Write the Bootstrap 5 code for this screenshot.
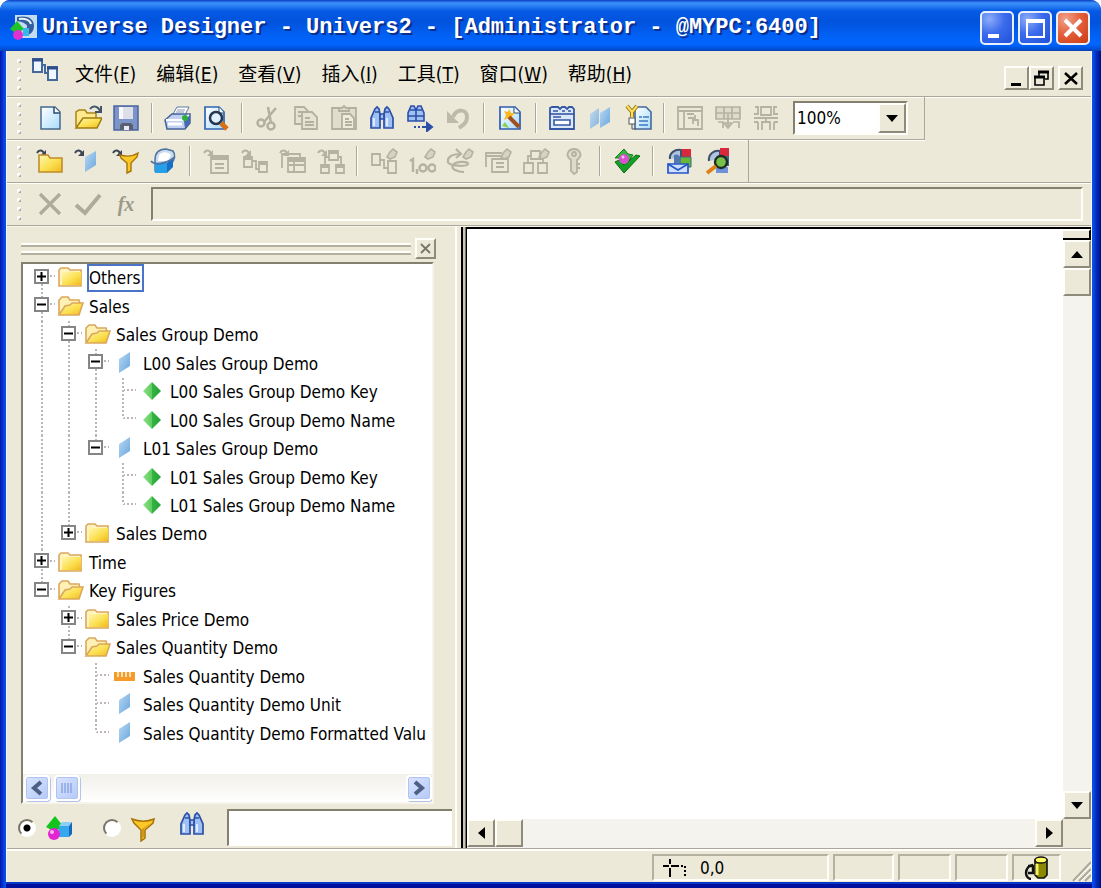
<!DOCTYPE html>
<html lang="zh-CN">
<head>
<meta charset="utf-8">
<meta name="viewport" content="width=device-width, initial-scale=1">
<title>Universe Designer</title>
<link href="https://cdn.jsdelivr.net/npm/bootstrap@5.3.0/dist/css/bootstrap.min.css" rel="stylesheet">
<style>
:root{--face:#ece9d8;--shade:#aca899;--dark:#83806f;--lite:#fffef8}
body{font-family:"DejaVu Sans Condensed","Noto Sans CJK SC",sans-serif;font-size:17px;line-height:24px;color:#000;background:#fff}
svg{display:block;flex:none}
.frame{min-height:100vh;border-radius:10px 10px 0 0;overflow:hidden;background:linear-gradient(to right,#0015b0,#0a4fe8 5px,#0a4fe8 calc(100% - 8px),#0030c8 calc(100% - 5px),#00107c);padding:0 9px 6px 6px}
.frame-body{background:var(--face);border-left:1px solid #f6f6f6;border-right:1px solid #f6f6f6;box-shadow:0 2px #0a36c8,0 6px #00109c}
.title-bar{height:51px;margin:0 -9px 0 -6px;padding:5px 11px 0 10px;background:linear-gradient(#0b3fc4,#3c92fb 3px,#2a80f4 6px,#0559e4 11px,#0153dd 22px,#0161f5 36px,#0266ff 44px,#0050d8 49px,#0a3fb0);}
.title-text{font:bold 22px/28px "Liberation Mono","DejaVu Sans Mono",monospace;color:#fff;text-shadow:2px 2px #0a2f8c}
.cap-btn{width:34px;height:34px;padding:0;border:2px solid #e8efff;border-radius:5px;background:radial-gradient(circle at 25% 20%,#8cacf8,#3c6cec 45%,#2050d8)}
.cap-close{background:radial-gradient(circle at 25% 20%,#f0a088,#e25c38 50%,#c83c14)}
.menu-bar{height:46px;border-bottom:1px solid var(--shade);box-shadow:0 1px var(--lite)}
.menu-list{gap:20px}
.menu-bar a{color:#000;text-decoration:none;font-size:19px;line-height:28px}
.grab{width:24px;flex:none;display:flex;justify-content:center}
.raised{background:var(--face);border:2px solid;border-color:#fffef8 #8e8b7c #8e8b7c #fffef8;padding:0;display:flex;align-items:center;justify-content:center;flex:none}
.mdi-btn{width:25px;height:24px}
.tools{height:43px;border-bottom:1px solid var(--shade);box-shadow:0 1px var(--lite)}
.tools-short{width:fit-content;border-right:1px solid var(--shade)}
.tools-part{border-right:1px solid var(--shade);padding-right:11px}
.tool{width:38px;height:38px;padding:0;border:0;background:none;display:flex;align-items:center;justify-content:center;flex:none}
.fx{font:italic bold 20px "Liberation Serif",serif;color:#9c998a}
.formula{margin:4px 8px 4px 6px}
.bar-gap{flex:none;width:14px;height:30px;background:linear-gradient(to right,var(--shade) 1px,var(--lite) 1px) 6px 0/2px 100% no-repeat}
.tools-wide .bar-gap{width:15px}
.zoom-box{width:115px;height:34px;border:2px solid;border-color:var(--dark) var(--lite) var(--lite) var(--dark);background:#fff;position:relative}
.zoom-box select{width:100%;height:100%;border:0;padding:0 0 0 2px;appearance:none;background:none;font-size:17px;outline:0;color:#000}
.zoom-box .raised{position:absolute;top:0;right:0;bottom:0;width:28px;pointer-events:none}
.sunken{border:2px solid;border-color:var(--dark) var(--lite) var(--lite) var(--dark);background:var(--face);border-radius:0}
.work{border-top:1px solid #f8f6ec}
.side-pane{width:448px;flex:none;padding-right:3px}
.pane-head{height:35px;padding:8px 0 0 14px}
.pane-line{height:4px;border-top:2px solid var(--lite);border-bottom:2px solid #b4b1a1}
.pane-close{width:21px;height:21px}
.tree-box{margin:0 18px 0 14px;border:2px solid;border-color:var(--dark) #f6f4ec #f6f4ec var(--dark);background:#fff;overflow:hidden}
.tree{list-style:none;margin:0;padding:0 0 26px 5px}
.tree li{flex:1 1 28px;display:flex;align-items:stretch;white-space:nowrap}
.g{width:27px;flex:none;display:flex;align-items:center;justify-content:center;
 --down:repeating-linear-gradient(#bdb6b2 0 2px,#fff 2px 4px);--over:repeating-linear-gradient(to right,#bdb6b2 0 2px,#fff 2px 4px)}
.g-v{background:var(--down) 13px 0/2px 100% no-repeat}
.g-t{background:var(--down) 13px 0/2px 100% no-repeat,var(--over) 14px 11px/13px 2px no-repeat}
.g-l{background:var(--down) 13px 0/2px 12px no-repeat,var(--over) 14px 11px/13px 2px no-repeat}
.g-f{background:var(--down) 13px 12px/2px 100% no-repeat,var(--over) 14px 11px/13px 2px no-repeat}
.knob{width:15px;height:15px;margin-bottom:4px;padding:0;border:2px solid #858585;background:#fff;display:flex;align-items:center;justify-content:center}
.pic{width:31px;flex:none;display:flex;align-items:center;justify-content:center;padding-bottom:2px}
.leaf-text{align-self:center;padding:0 2px 0 3px;line-height:28px}
.leaf-on{margin-left:1px;padding-left:0;line-height:24px;border:2px solid #4a74c8}
.xp-scroll{height:28px;background:linear-gradient(#f1f0ea,#fff);padding:1px 0 0 1px}
.xp-btn{width:26px;height:26px;padding:0;border:2px solid #fff;border-radius:4px;background:linear-gradient(135deg,#dbe5ff,#b4c8f8);box-shadow:inset 0 0 0 1px #b0c4f4,1px 1px #b4c4e8;display:flex;align-items:center;justify-content:center}
.find-row{height:44px;padding:3px 0 0 11px}
.find-row input[type=radio]{appearance:none;width:18px;height:18px;margin:0;border-radius:50%;border:2px solid;border-color:#77756a #fff #fff #77756a;background:#fff}
.find-row input[type=radio]:checked{background:radial-gradient(circle,#000 3px,#fff 4px)}
.find-row input[type=text]{width:225px;height:37px;background:#fff;border-right-width:0;border-bottom-width:1px;outline:0}
.divider{width:12px;flex:none;background:linear-gradient(to right,var(--lite) 0 2px,var(--face) 2px 6px,#000 6px 8px,#c9c6b8 8px 10px,#77756a 10px 11px,#000 11px)}
.canvas-col{min-width:0;border-top:2px solid #000}
.track{background:#f4f3ee}
.v-track{width:28px;flex:none}
.h-track{height:29px}
.arrow-key{width:28px;height:28px}
.split-bit{height:11px;border:2px solid #000;border-left:0;border-top-color:#fffef8;background:var(--face)}
.status{height:34px;border-top:1px solid var(--shade);box-shadow:inset 0 2px var(--lite);padding:5px 0 0}
.cell{border:2px solid;border-color:#b4b1a1 var(--lite) var(--lite) #b4b1a1;height:27px;flex:none;width:53px}
.cell-pos{width:177px}
.cell-wide{width:61px}
.cell-db{width:49px}
</style>
</head>
<body>
<svg width="0" height="0" class="position-absolute" aria-hidden="true">
<defs>
<linearGradient id="gy" x1="0" y1="0" x2="1" y2="1"><stop offset="0" stop-color="#fff6b0"/><stop offset=".55" stop-color="#fbe050"/><stop offset="1" stop-color="#f0b820"/></linearGradient>
<linearGradient id="gb" x1="0" y1="0" x2="1" y2="1"><stop offset="0" stop-color="#b8d8f4"/><stop offset="1" stop-color="#6aa6dc"/></linearGradient>
<linearGradient id="gp" x1="0" y1="0" x2="1" y2="1"><stop offset="0" stop-color="#fff"/><stop offset="1" stop-color="#a8dcfc"/></linearGradient>
<linearGradient id="gg" x1="0" y1="0" x2="1" y2="0"><stop offset="0" stop-color="#8ee08a"/><stop offset=".5" stop-color="#5ccc5c"/><stop offset=".5" stop-color="#36b444"/><stop offset="1" stop-color="#24a038"/></linearGradient>
<symbol id="grip" viewBox="0 0 6 34"><g fill="#fff"><rect x="1" y="2" width="4" height="4" rx="1"/><rect x="1" y="11" width="4" height="4" rx="1"/><rect x="1" y="20" width="4" height="4" rx="1"/><rect x="1" y="29" width="4" height="4" rx="1"/></g><g fill="#aeab9c"><path d="M5 3v3H2zM5 12v3H2zM5 21v3H2zM5 30v3H2z"/></g></symbol>
<symbol id="app" viewBox="0 0 28 28"><rect x="5" y="1" width="22" height="23" fill="#c4dcf0"/><path d="M7 3c10-2 17 1 17 9 0 6-4 9-8 9l-1-6c4-2 3-6-8-8z" fill="#345f9c"/><path d="M9 5c6-1 11 1 12 5" stroke="#e8f4ff" stroke-width="2" fill="none"/><path d="M0 15L7 7l7 8-7 5z" fill="#20c428"/><circle cx="8" cy="21" r="5" fill="#e030d0"/><rect x="13" y="14" width="6" height="8" fill="#38b8e8"/></symbol>
<symbol id="doclink" viewBox="0 0 28 26"><g fill="#eef6ff" stroke="#44689c" stroke-width="2"><rect x="2" y="2" width="9" height="13"/><rect x="17" y="10" width="9" height="13"/></g><path d="M1 3h11M16 11h11" stroke="#2e4f8c" stroke-width="3"/><path d="M11 8h3v8h3" stroke="#44689c" stroke-width="2" fill="none"/></symbol>
<symbol id="new" viewBox="0 0 26 26"><path d="M4 2h14l5 5v17H4z" fill="url(#gp)" stroke="#44688c" stroke-width="1.5"/><path d="M17 2v6h6" fill="#fff" stroke="#2c4a70" stroke-width="1.5"/></symbol>
<symbol id="open" viewBox="0 0 28 26"><path d="M2 22V7l3-2h6l2 3h9v5" fill="#ffe98c" stroke="#a88418" stroke-width="1.5"/><path d="M2 23l7-10h19l-5 10z" fill="url(#gy)" stroke="#a07c10" stroke-width="1.5"/><path d="M16 4c3-4 8-3 10 2M27 1v6h-6" fill="none" stroke="#44546c" stroke-width="2"/></symbol>
<symbol id="save" viewBox="0 0 26 26"><rect x="1" y="1" width="24" height="24" fill="#7c94c8" stroke="#4c64a0" stroke-width="1.5"/><rect x="6" y="2" width="14" height="12" fill="#dcdfe8"/><rect x="6" y="2" width="4" height="12" fill="#f8f8fc"/><path d="M7 25v-5l2-2h9l2 2v5z" fill="#5a6070"/><rect x="11" y="21" width="5" height="4" fill="#e8ecf4"/></symbol>
<symbol id="print" viewBox="0 0 28 26"><path d="M9 9l4-7h12l-4 8z" fill="#fff" stroke="#6078a8"/><path d="M13 5h8M12 7h8" stroke="#8894b0"/><path d="M1 15l7-6h18v9l-5 6H3z" fill="#c0d0f0" stroke="#46629c" stroke-width="1.5"/><path d="M2 15h17l6-5" stroke="#fff" fill="none" stroke-width="2"/><path d="M20 16l6-6v8l-5 6z" fill="#4868b0"/><path d="M4 19h14" stroke="#fff" stroke-width="3"/><circle cx="21" cy="13" r="3" fill="#2cb03c"/></symbol>
<symbol id="preview" viewBox="0 0 26 26"><path d="M2 2h14l5 5v17H2z" fill="url(#gp)" stroke="#2f64b4" stroke-width="1.7"/><path d="M16 2v6h5" fill="#fff" stroke="#2c4a70"/><circle cx="13" cy="13" r="6" fill="#e0f2ff" stroke="#26374e" stroke-width="2.5"/><path d="M18 18l6 6" stroke="#d87018" stroke-width="5"/></symbol>
<symbol id="cut" viewBox="0 0 26 26"><g fill="none" stroke="#b3b0a1" stroke-width="2.5"><path d="M21 3L9 17M13 2l3 16"/><circle cx="6" cy="18" r="3.5"/><circle cx="16" cy="21" r="3.5"/></g></symbol>
<symbol id="copy" viewBox="0 0 26 26"><g fill="#e6e3d3" stroke="#b3b0a1" stroke-width="1.8"><path d="M2 2h9l4 4v13H2z"/><path d="M9 7h10l5 5v12H9z"/><path d="M5 7h4M5 11h4M12 13h5M12 17h9M12 20h9"/></g></symbol>
<symbol id="paste" viewBox="0 0 26 26"><g fill="#e0ddcd" stroke="#b3b0a1" stroke-width="1.8"><path d="M1 3h24v21H1z"/><path d="M8 6V3h3l2-2 2 2h3v3z"/><path d="M11 9h8l4 4v11H11z" fill="#efecdd"/><path d="M14 14h4M14 17h7M14 20h7"/></g></symbol>
<symbol id="find" viewBox="0 0 26 26"><g fill="#9fc0f2" stroke="#2c4fa8" stroke-width="1.7"><path d="M6 4l2-2 2 2 1 5v14H2V13z"/><path d="M20 4l-2-2-2 2-1 5v14h9V13z"/><path d="M11 9h4v5h-4z"/><path d="M6 7h4M16 7h4"/></g><path d="M5 13v8M18 13v8" stroke="#dcebff" stroke-width="2"/></symbol>
<symbol id="findnext" viewBox="0 0 28 28"><g fill="#9fc0f2" stroke="#2c4fa8" stroke-width="1.6"><path d="M5 2h3l2 4v11H2V9zM15 2h-3l-2 4v11h8V9z"/><path d="M4 6h12M2 12h16"/></g><path d="M8 23h2m2 0h2m2 0h9M21 19l5 4-5 4z" stroke="#2c4fa8" stroke-width="2" fill="#2c4fa8"/></symbol>
<symbol id="undo" viewBox="0 0 26 26"><path d="M8 12C12 3 22 4 22 12c0 6-4 8-8 11" fill="none" stroke="#bdbaac" stroke-width="4"/><path d="M2 6v12h12z" fill="#bdbaac"/></symbol>
<symbol id="wizard" viewBox="0 0 26 26"><path d="M3 2h15l5 5v17H3z" fill="url(#gp)" stroke="#2f5cb0" stroke-width="1.7"/><path d="M17 2v6h6" fill="#fff" stroke="#2c4a70"/><path d="M12 4l2 4 4 0-3 3 1 5-5-3-4 2 2-5-2-4 4 1z" fill="#fbb820"/><path d="M12 12l10 10" stroke="#a05020" stroke-width="4"/><path d="M5 21l3-4 4 6" fill="#8ccc50"/></symbol>
<symbol id="form" viewBox="0 0 26 26"><path d="M1 3l2-1h6l2 2 2-2h3l2 2 2-2h3l2 2v20H1z" fill="#dce8fa" stroke="#3458a4" stroke-width="1.8"/><path d="M1 9h24" stroke="#3458a4" stroke-width="1.6"/><path d="M4 12h8M4 6h5M13 6h3M19 6h3" stroke="#3458a4" stroke-width="1.6"/><path d="M5 15h16v5H5z" fill="#fff" stroke="#3458a4" stroke-width="1.6"/></symbol>
<symbol id="twin" viewBox="0 0 26 26"><path d="M3 9l9-6v15l-9 6z" fill="url(#gb)" opacity=".8"/><path d="M13 8l10-6v15l-10 6z" fill="url(#gb)"/></symbol>
<symbol id="cond" viewBox="0 0 28 28"><path d="M11 3h11l5 5v17H11z" fill="url(#gp)" stroke="#44689c" stroke-width="1.6"/><path d="M15 13h3M19 13h6M15 17h9M15 21h9" stroke="#3f78c0" stroke-width="1.6"/><path d="M3 2l5 6 5-6M8 8v5" stroke="#9a7a10" stroke-width="4" fill="none"/><path d="M3 2l5 6 5-6M8 8v5" stroke="#ffe060" stroke-width="2" fill="none"/><rect x="5" y="14" width="6" height="6" fill="#fff" stroke="#555"/><path d="M8 20v5h4" stroke="#555" fill="none"/></symbol>
<symbol id="gridlist" viewBox="0 0 26 26"><g fill="none" stroke="#b5b2a3" stroke-width="1.8"><path d="M1 2h24v22H1zM1 6h24M7 6v18M10 9h7M11 13h5v6M16 15h5v6M18 10v5"/></g></symbol>
<symbol id="gridmove" viewBox="0 0 26 26"><g fill="#dedbcb" stroke="#b5b2a3" stroke-width="1.7"><path d="M1 2h24v12H1zM1 8h24M9 2v12M17 2v12"/><path d="M13 9v14M9 18h8l-4 5z"/><path d="M3 17h5v6M18 17h6v6" fill="none"/></g></symbol>
<symbol id="fit" viewBox="0 0 26 26"><g fill="none" stroke="#b5b2a3" stroke-width="1.8"><path d="M8 2h10v8H8zM2 2h3v7H1M24 2h-3v7h4M1 13h24M5 17v8M1 17h4M21 17v8M21 17h4M9 25v-8h8v8M13 13v4"/></g></symbol>
<symbol id="mini" viewBox="0 0 28 28"><path d="M1 6c2-4 6-3 7 1" fill="none" stroke="currentColor" stroke-width="2"/><path d="M10 3v6H4z" fill="currentColor"/></symbol>
<symbol id="nclass" viewBox="0 0 28 28"><g color="#3c4654"><use href="#mini" width="28" height="28"/></g><path d="M3 25V8h9l2 3h12v14z" fill="url(#gy)" stroke="#c08c2c" stroke-width="1.6"/></symbol>
<symbol id="ndim" viewBox="0 0 28 28"><g color="#3c4654"><use href="#mini" width="28" height="28"/></g><path d="M11 10l11-6v14l-11 7z" fill="url(#gb)"/></symbol>
<symbol id="funnel" viewBox="0 0 28 28"><path d="M3 5c8 3 15 3 22 0l-1 4-8 7v8l-4 3V16L5 9z" fill="#fbc828" stroke="#a87408" stroke-width="1.5"/><path d="M13 15v9l2-1V15l7-6" fill="#b87810" opacity=".6"/></symbol>
<symbol id="nfun" viewBox="0 0 28 28"><g color="#3c4654"><use href="#mini" width="28" height="28"/></g><path d="M8 8c7 2 12 2 18-2l-1 4-6 6v8l-4 2V16l-6-5z" fill="#fbc828" stroke="#a87408" stroke-width="1.4"/></symbol>
<symbol id="cube" viewBox="0 0 28 28"><path d="M5 13c0-8 5-11 11-11l7 2c3 4 1 9-1 12l-5 8H5z" fill="#c8dcf0" stroke="#5074a0" stroke-width="1.5"/><path d="M9 8c4-4 9-3 12 0l-3 6H8z" fill="#fff"/><path d="M5 16h12v10H5z" fill="#28a0e8"/><path d="M17 16l6-5v9l-6 6z" fill="#1870c4"/><path d="M1 14c3 4 14 4 24-4" stroke="#4c74a8" stroke-width="2" fill="none"/></symbol>
<symbol id="t1" viewBox="0 0 28 28"><g color="#b5b2a3"><use href="#mini" width="28" height="28"/><g fill="none" stroke="currentColor" stroke-width="1.8"><path d="M8 9h17v17H8zM12 17h9M12 21h9"/><path d="M8 11h17" stroke-width="4"/></g></g></symbol>
<symbol id="t2" viewBox="0 0 28 28"><g color="#b5b2a3"><use href="#mini" width="28" height="28"/><g fill="none" stroke="currentColor" stroke-width="1.8"><path d="M3 10h8v10H3zM18 15h8v10h-8zM11 14h4v8h3M3 12h8M18 17h8"/></g></g></symbol>
<symbol id="t3" viewBox="0 0 28 28"><g color="#b5b2a3"><use href="#mini" width="28" height="28"/><g fill="none" stroke="currentColor" stroke-width="1.8"><path d="M3 21V7h18v3M9 11h17v14H9zM9 18h17M15 15v10"/><path d="M9 13h17" stroke-width="4"/></g></g></symbol>
<symbol id="t4" viewBox="0 0 28 28"><g color="#b5b2a3"><use href="#mini" width="28" height="28"/><g fill="none" stroke="currentColor" stroke-width="1.8"><path d="M12 4h9v9h-9zM4 18h8v8H4zM19 18h8v8h-8zM12 10H8v8M21 10h3v8M12 6h9M4 20h8M19 20h8"/></g></g></symbol>
<symbol id="spark" viewBox="0 0 28 28"><path d="M20 5l3-3 4 3-2 5-5 2-3-2z" fill="#d6d3c3" stroke="#b5b2a3" stroke-width="1.6"/></symbol>
<symbol id="s1" viewBox="0 0 28 28"><use href="#spark" width="28" height="28"/><g fill="none" stroke="#b5b2a3" stroke-width="1.8"><path d="M2 7h8v11H2zM18 14h8v12h-8zM10 13h4v8h4"/></g></symbol>
<symbol id="s2" viewBox="0 0 28 28"><use href="#spark" width="28" height="28"/><g fill="none" stroke="#b5b2a3" stroke-width="2.4"><path d="M2 14l3-2v13M9 22v5"/><circle cx="15" cy="21" r="3.5"/><circle cx="24" cy="21" r="3.5"/></g></symbol>
<symbol id="s3" viewBox="0 0 28 28"><use href="#spark" width="28" height="28"/><g fill="none" stroke="#b5b2a3" stroke-width="2.2"><path d="M14 7C5 7 1 11 2 15s19 5 20 2-12-3-15 1 5 7 11 7M10 2l5 5-5 4"/></g></symbol>
<symbol id="s4" viewBox="0 0 28 28"><use href="#spark" width="28" height="28"/><g fill="none" stroke="#b5b2a3" stroke-width="1.8"><path d="M2 20V6h16M2 9h15M8 12h16v13H8zM12 16h8M12 20h8"/></g></symbol>
<symbol id="s5" viewBox="0 0 28 28"><use href="#spark" width="28" height="28"/><g fill="none" stroke="#b5b2a3" stroke-width="1.8"><path d="M9 4h9v8H9zM2 16h9v10H2zM16 16h9v10h-9zM9 9H6v7M18 12h3v4"/></g></symbol>
<symbol id="pkey" viewBox="0 0 28 28"><g fill="#dedbcb" stroke="#b5b2a3" stroke-width="1.8"><path d="M11 13C4 8 9 2 14 2s10 6 3 11v12l-3 2-3-3z"/><circle cx="14" cy="7" r="2"/><path d="M17 17h3M17 21h3"/></g></symbol>
<symbol id="check" viewBox="0 0 28 28"><path d="M2 11l9-9 4 5 5 1-5 7-6-4z" fill="#30b838" stroke="#147a1c"/><path d="M2 15l9 11L27 9l-4-1-12 10-5-5z" fill="#14a024" stroke="#086c14"/><circle cx="11" cy="12" r="5" fill="#d850d0"/><circle cx="10" cy="10" r="1.5" fill="#fbc4f4"/></symbol>
<symbol id="mail" viewBox="0 0 28 28"><path d="M4 12c-1-6 5-10 11-9v8" fill="#b0c4dc" stroke="#40506c" stroke-width="2"/><path d="M16 2h9v8h-9z" fill="#d8283c"/><path d="M14 10h11v10H14z" fill="#68b838" stroke="#386888"/><path d="M8 8c5-2 8 2 6 8l-6 1z" fill="#5478b0"/><path d="M2 17h20v9H2z" fill="#cfe0ff" stroke="#2454c8" stroke-width="1.7"/><path d="M2 17l10 6 10-6" fill="none" stroke="#2454c8" stroke-width="1.7"/></symbol>
<symbol id="lens" viewBox="0 0 28 28"><path d="M5 14c-1-7 5-11 11-10v8" fill="#b0c4dc" stroke="#40506c" stroke-width="2"/><path d="M16 1h9v8h-9z" fill="#d8283c"/><path d="M12 20h12v6H12z" fill="#7090d8"/><path d="M19 9h6v10h-6z" fill="#386888"/><circle cx="17" cy="15" r="6" fill="#78c048" stroke="#1c2c24" stroke-width="2.4"/><path d="M12 19l-9 7" stroke="#e08018" stroke-width="4"/></symbol>
<symbol id="cross" viewBox="0 0 26 26"><path d="M3 3l20 20M23 3L3 23" stroke="#aeab9b" stroke-width="3.2"/></symbol>
<symbol id="tick" viewBox="0 0 28 26"><path d="M2 14l9 8L26 4" fill="none" stroke="#aeab9b" stroke-width="4"/></symbol>
<symbol id="fold" viewBox="0 0 28 24"><path d="M2 21V5l2-2h7l2 2h11v16z" fill="#fff3c0" stroke="#dba75c" stroke-width="1.6"/><path d="M5 7h19v13H5z" fill="url(#gy)"/></symbol>
<symbol id="ofold" viewBox="0 0 28 24"><path d="M2 20V6l3-3h6l2 3h9l1 4" fill="#fff0b4" stroke="#dba75c" stroke-width="1.6"/><path d="M2 21l6-9 5-1 2-2h11l-4 12z" fill="url(#gy)" stroke="#dba75c" stroke-width="1.6"/></symbol>
<symbol id="dim" viewBox="0 0 26 24"><path d="M7 8l11-7v14L7 22z" fill="url(#gb)"/></symbol>
<symbol id="dia" viewBox="0 0 26 24"><path d="M13 3l9 9-9 9-9-9z" fill="url(#gg)"/></symbol>
<symbol id="rule" viewBox="0 0 26 24"><rect x="2" y="8" width="21" height="9" fill="#f79a2c"/><path d="M6 8v5M10 8v5M14 8v5M18 8v5" stroke="#fff0d0" stroke-width="1.6"/></symbol>
<symbol id="shapes" viewBox="0 0 30 28"><path d="M2 13L11 2l8 10-8 6z" fill="#12c41c"/><path d="M15 12l3-4h10l-3 4z" fill="#8cd0f8"/><path d="M15 12h10v11H15z" fill="#38a8ec"/><path d="M25 12l3-4v12l-3 3z" fill="#1468c0"/><circle cx="10" cy="20" r="6" fill="#e224d4"/><circle cx="8" cy="18" r="2" fill="#fbb4f4"/></symbol>
<symbol id="db" viewBox="0 0 26 24"><path d="M9 9c-4 0-7 4-7 8s3 6 5 6M4 10h5v7H4" fill="none" stroke="#111" stroke-width="2.4"/><path d="M11 4h12v15l-3 3h-6l-3-3z" fill="#8c8800" stroke="#111" stroke-width="1.6"/><path d="M13 8v11" stroke="#f4f060" stroke-width="3"/><ellipse cx="17" cy="4" rx="6" ry="3" fill="#fffc60" stroke="#111" stroke-width="1.4"/></symbol>
<symbol id="plus" viewBox="0 0 9 9"><path d="M0 4.500h9M4.500 0v9" stroke="#000" stroke-width="2"/></symbol>
<symbol id="minus" viewBox="0 0 9 9"><path d="M0 4.500h9" stroke="#000" stroke-width="2"/></symbol>
</defs></svg>

<div class="frame d-flex flex-column">
 <header class="title-bar d-flex align-items-center">
  <svg width="28" height="28"><use href="#app"/></svg>
  <h1 class="title-text mb-0 ms-1 flex-grow-1 text-nowrap">Universe Designer - Univers2 - [Administrator - @MYPC:6400]</h1>
  <div class="d-flex gap-1">
   <button type="button" class="cap-btn" aria-label="Minimize"><svg width="30" height="30"><path d="M6 21h11v4H6z" fill="#fff"/></svg></button>
   <button type="button" class="cap-btn" aria-label="Maximize"><svg width="30" height="30"><path d="M7 7h17v17H7z" fill="none" stroke="#fff" stroke-width="2"/><path d="M6 8h19" stroke="#fff" stroke-width="4"/></svg></button>
   <button type="button" class="cap-btn cap-close" aria-label="Close"><svg width="30" height="30"><path d="M7 7l16 16M23 7L7 23" stroke="#fff" stroke-width="4"/></svg></button>
  </div>
 </header>

 <div class="frame-body flex-grow-1 d-flex flex-column">
  <nav class="menu-bar d-flex align-items-center">
   <span class="grab"><svg width="6" height="34"><use href="#grip"/></svg></span>
   <svg width="28" height="26" class="mb-2"><use href="#doclink"/></svg>
   <div class="menu-list d-flex flex-grow-1 ms-3 text-nowrap">
    <a href="#">文件(<u>F</u>)</a><a href="#">编辑(<u>E</u>)</a><a href="#">查看(<u>V</u>)</a><a href="#">插入(<u>I</u>)</a><a href="#">工具(<u>T</u>)</a><a href="#">窗口(<u>W</u>)</a><a href="#">帮助(<u>H</u>)</a>
   </div>
   <div class="d-flex me-2 mt-2">
    <button type="button" class="raised mdi-btn" aria-label="Minimize document"><svg width="20" height="20"><path d="M4 15h10v3H4z"/></svg></button>
    <button type="button" class="raised mdi-btn" aria-label="Restore document"><svg width="20" height="20"><g fill="none" stroke="#000" stroke-width="1.600"><path d="M7 8V4h9v7h-3M3 9h9v8H3z"/><path d="M6 4h11M2 9h11" stroke-width="3"/></g></svg></button>
    <button type="button" class="raised mdi-btn ms-1" aria-label="Close document"><svg width="20" height="20"><path d="M4 5l12 11M16 5L4 16" stroke="#000" stroke-width="2.500"/></svg></button>
   </div>
  </nav>

  <div class="tools tools-short d-flex align-items-center pe-3" role="toolbar" aria-label="Standard">
   <span class="grab"><svg width="6" height="34"><use href="#grip"/></svg></span>
   <button type="button" class="tool" aria-label="New"><svg width="26" height="26"><use href="#new"/></svg></button>
   <button type="button" class="tool" aria-label="Open"><svg width="28" height="26"><use href="#open"/></svg></button>
   <button type="button" class="tool" aria-label="Save"><svg width="26" height="26"><use href="#save"/></svg></button>
   <span class="bar-gap"></span>
   <button type="button" class="tool" aria-label="Print"><svg width="28" height="26"><use href="#print"/></svg></button>
   <button type="button" class="tool" aria-label="Print preview"><svg width="26" height="26"><use href="#preview"/></svg></button>
   <span class="bar-gap"></span>
   <button type="button" class="tool" aria-label="Cut"><svg width="26" height="26"><use href="#cut"/></svg></button>
   <button type="button" class="tool" aria-label="Copy"><svg width="26" height="26"><use href="#copy"/></svg></button>
   <button type="button" class="tool" aria-label="Paste"><svg width="26" height="26"><use href="#paste"/></svg></button>
   <button type="button" class="tool" aria-label="Find"><svg width="26" height="26"><use href="#find"/></svg></button>
   <button type="button" class="tool" aria-label="Find next"><svg width="28" height="28"><use href="#findnext"/></svg></button>
   <button type="button" class="tool" aria-label="Undo"><svg width="26" height="26"><use href="#undo"/></svg></button>
   <span class="bar-gap"></span>
   <button type="button" class="tool" aria-label="Wizard"><svg width="26" height="26"><use href="#wizard"/></svg></button>
   <span class="bar-gap"></span>
   <button type="button" class="tool" aria-label="Parameters"><svg width="26" height="26"><use href="#form"/></svg></button>
   <button type="button" class="tool" aria-label="Hierarchies"><svg width="26" height="26"><use href="#twin"/></svg></button>
   <button type="button" class="tool" aria-label="Conditions"><svg width="28" height="28"><use href="#cond"/></svg></button>
   <span class="bar-gap"></span>
   <button type="button" class="tool" aria-label="List mode"><svg width="26" height="26"><use href="#gridlist"/></svg></button>
   <button type="button" class="tool" aria-label="Arrange tables"><svg width="26" height="26"><use href="#gridmove"/></svg></button>
   <button type="button" class="tool" aria-label="Gridlines"><svg width="26" height="26"><use href="#fit"/></svg></button>
   <div class="zoom-box ms-2">
    <select aria-label="Zoom"><option>100%</option></select>
    <span class="raised"><svg width="12" height="7"><path d="M0 0h12L6 7z"/></svg></span>
   </div>
  </div>

  <div class="tools tools-wide d-flex align-items-stretch" role="toolbar" aria-label="Editing">
   <div class="tools-part d-flex align-items-center">
   <span class="grab"><svg width="6" height="34"><use href="#grip"/></svg></span>
   <button type="button" class="tool" aria-label="Insert class"><svg width="28" height="28"><use href="#nclass"/></svg></button>
   <button type="button" class="tool" aria-label="Insert object"><svg width="28" height="28"><use href="#ndim"/></svg></button>
   <button type="button" class="tool" aria-label="Insert condition"><svg width="28" height="28"><use href="#nfun"/></svg></button>
   <button type="button" class="tool" aria-label="Show or hide"><svg width="28" height="28"><use href="#cube"/></svg></button>
   <span class="bar-gap"></span>
   <button type="button" class="tool" aria-label="Table browser"><svg width="28" height="28"><use href="#t1"/></svg></button>
   <button type="button" class="tool" aria-label="Insert join"><svg width="28" height="28"><use href="#t2"/></svg></button>
   <button type="button" class="tool" aria-label="Insert alias"><svg width="28" height="28"><use href="#t3"/></svg></button>
   <button type="button" class="tool" aria-label="Insert context"><svg width="28" height="28"><use href="#t4"/></svg></button>
   <span class="bar-gap"></span>
   <button type="button" class="tool" aria-label="Detect joins"><svg width="28" height="28"><use href="#s1"/></svg></button>
   <button type="button" class="tool" aria-label="Detect cardinalities"><svg width="28" height="28"><use href="#s2"/></svg></button>
   <button type="button" class="tool" aria-label="Detect loops"><svg width="28" height="28"><use href="#s3"/></svg></button>
   <button type="button" class="tool" aria-label="Detect aliases"><svg width="28" height="28"><use href="#s4"/></svg></button>
   <button type="button" class="tool" aria-label="Detect contexts"><svg width="28" height="28"><use href="#s5"/></svg></button>
   <button type="button" class="tool" aria-label="Keys"><svg width="28" height="28"><use href="#pkey"/></svg></button>
   <span class="bar-gap"></span>
   <button type="button" class="tool" aria-label="Check integrity"><svg width="28" height="28"><use href="#check"/></svg></button>
   <span class="bar-gap"></span>
   <button type="button" class="tool" aria-label="Export"><svg width="28" height="28"><use href="#mail"/></svg></button>
   <button type="button" class="tool" aria-label="Inspect"><svg width="28" height="28"><use href="#lens"/></svg></button>
   </div>
  </div>

  <div class="tools d-flex align-items-center" role="toolbar" aria-label="Formula">
   <span class="grab"><svg width="6" height="34"><use href="#grip"/></svg></span>
   <button type="button" class="tool" aria-label="Cancel"><svg width="26" height="26"><use href="#cross"/></svg></button>
   <button type="button" class="tool" aria-label="Validate"><svg width="28" height="26"><use href="#tick"/></svg></button>
   <button type="button" class="tool fx" aria-label="Edit formula">fx</button>
   <input type="text" class="sunken formula flex-grow-1 align-self-stretch" aria-label="Formula">
  </div>

  <main class="work flex-grow-1 d-flex">
   <section class="side-pane d-flex flex-column" aria-label="Universe objects">
    <div class="pane-head d-flex align-items-center">
     <div class="flex-grow-1 me-1 d-flex flex-column gap-1"><div class="pane-line"></div><div class="pane-line"></div></div>
     <button type="button" class="raised pane-close me-3" aria-label="Close pane"><svg width="13" height="13"><path d="M2 2l9 9M11 2l-9 9" stroke="#77756a" stroke-width="1.800"/></svg></button>
    </div>
    <div class="tree-box flex-grow-1 d-flex flex-column">
     <ul class="tree flex-grow-1 d-flex flex-column">
      <li><span class="g g-f"><button type="button" class="knob" aria-label="Expand"><svg width="9" height="9"><use href="#plus"/></svg></button></span><span class="pic"><svg width="28" height="24"><use href="#fold"/></svg></span><span class="leaf-text leaf-on">Others</span></li>
      <li><span class="g g-t"><button type="button" class="knob" aria-label="Collapse"><svg width="9" height="9"><use href="#minus"/></svg></button></span><span class="pic"><svg width="28" height="24"><use href="#ofold"/></svg></span><span class="leaf-text">Sales</span></li>
      <li><span class="g g-v"></span><span class="g g-t"><button type="button" class="knob" aria-label="Collapse"><svg width="9" height="9"><use href="#minus"/></svg></button></span><span class="pic"><svg width="28" height="24"><use href="#ofold"/></svg></span><span class="leaf-text">Sales Group Demo</span></li>
      <li><span class="g g-v"></span><span class="g g-v"></span><span class="g g-t"><button type="button" class="knob" aria-label="Collapse"><svg width="9" height="9"><use href="#minus"/></svg></button></span><span class="pic"><svg width="26" height="24"><use href="#dim"/></svg></span><span class="leaf-text">L00 Sales Group Demo</span></li>
      <li><span class="g g-v"></span><span class="g g-v"></span><span class="g g-v"></span><span class="g g-t"></span><span class="pic"><svg width="26" height="24"><use href="#dia"/></svg></span><span class="leaf-text">L00 Sales Group Demo Key</span></li>
      <li><span class="g g-v"></span><span class="g g-v"></span><span class="g g-v"></span><span class="g g-l"></span><span class="pic"><svg width="26" height="24"><use href="#dia"/></svg></span><span class="leaf-text">L00 Sales Group Demo Name</span></li>
      <li><span class="g g-v"></span><span class="g g-v"></span><span class="g g-l"><button type="button" class="knob" aria-label="Collapse"><svg width="9" height="9"><use href="#minus"/></svg></button></span><span class="pic"><svg width="26" height="24"><use href="#dim"/></svg></span><span class="leaf-text">L01 Sales Group Demo</span></li>
      <li><span class="g g-v"></span><span class="g g-v"></span><span class="g"></span><span class="g g-t"></span><span class="pic"><svg width="26" height="24"><use href="#dia"/></svg></span><span class="leaf-text">L01 Sales Group Demo Key</span></li>
      <li><span class="g g-v"></span><span class="g g-v"></span><span class="g"></span><span class="g g-l"></span><span class="pic"><svg width="26" height="24"><use href="#dia"/></svg></span><span class="leaf-text">L01 Sales Group Demo Name</span></li>
      <li><span class="g g-v"></span><span class="g g-l"><button type="button" class="knob" aria-label="Expand"><svg width="9" height="9"><use href="#plus"/></svg></button></span><span class="pic"><svg width="28" height="24"><use href="#fold"/></svg></span><span class="leaf-text">Sales Demo</span></li>
      <li><span class="g g-t"><button type="button" class="knob" aria-label="Expand"><svg width="9" height="9"><use href="#plus"/></svg></button></span><span class="pic"><svg width="28" height="24"><use href="#fold"/></svg></span><span class="leaf-text">Time</span></li>
      <li><span class="g g-l"><button type="button" class="knob" aria-label="Collapse"><svg width="9" height="9"><use href="#minus"/></svg></button></span><span class="pic"><svg width="28" height="24"><use href="#ofold"/></svg></span><span class="leaf-text">Key Figures</span></li>
      <li><span class="g"></span><span class="g g-t"><button type="button" class="knob" aria-label="Expand"><svg width="9" height="9"><use href="#plus"/></svg></button></span><span class="pic"><svg width="28" height="24"><use href="#fold"/></svg></span><span class="leaf-text">Sales Price Demo</span></li>
      <li><span class="g"></span><span class="g g-l"><button type="button" class="knob" aria-label="Collapse"><svg width="9" height="9"><use href="#minus"/></svg></button></span><span class="pic"><svg width="28" height="24"><use href="#ofold"/></svg></span><span class="leaf-text">Sales Quantity Demo</span></li>
      <li><span class="g"></span><span class="g"></span><span class="g g-t"></span><span class="pic"><svg width="26" height="24"><use href="#rule"/></svg></span><span class="leaf-text">Sales Quantity Demo</span></li>
      <li><span class="g"></span><span class="g"></span><span class="g g-t"></span><span class="pic"><svg width="26" height="24"><use href="#dim"/></svg></span><span class="leaf-text">Sales Quantity Demo Unit</span></li>
      <li><span class="g"></span><span class="g"></span><span class="g g-l"></span><span class="pic"><svg width="26" height="24"><use href="#dim"/></svg></span><span class="leaf-text">Sales Quantity Demo Formatted Valu</span></li>
     </ul>
     <div class="xp-scroll d-flex">
      <button type="button" class="xp-btn" aria-label="Scroll left"><svg width="14" height="16"><path d="M11 2L4 8l7 6" fill="none" stroke="#4d6185" stroke-width="4"/></svg></button>
      <button type="button" class="xp-btn ms-1" aria-label="Scroll thumb"><svg width="14" height="12"><path d="M2 1v10M5 1v10M8 1v10M11 1v10" stroke="#8ca8e0" stroke-width="1.500"/></svg></button>
      <button type="button" class="xp-btn ms-auto" aria-label="Scroll right"><svg width="14" height="16"><path d="M3 2l7 6-7 6" fill="none" stroke="#4d6185" stroke-width="4"/></svg></button>
     </div>
    </div>
    <div class="find-row d-flex align-items-center">
     <input type="radio" name="view" id="v-obj" aria-label="Classes and objects" checked><label for="v-obj" class="ms-2"><svg width="30" height="28"><use href="#shapes"/></svg></label>
     <input type="radio" name="view" id="v-con" aria-label="Conditions" class="ms-auto"><label for="v-con" class="ms-2"><svg width="28" height="28"><use href="#funnel"/></svg></label>
     <button type="button" class="tool mx-3 mb-2" aria-label="Find object"><svg width="26" height="26"><use href="#find"/></svg></button>
     <input type="text" class="sunken" aria-label="Search text">
    </div>
   </section>
   <div class="divider"></div>
   <section class="canvas-col flex-grow-1 d-flex flex-column" aria-label="Structure">
    <div class="flex-grow-1 d-flex">
     <div class="flex-grow-1 bg-white"></div>
     <div class="track v-track d-flex flex-column">
      <div class="split-bit"></div>
      <button type="button" class="raised arrow-key" aria-label="Scroll up"><svg width="12" height="7"><path d="M0 7h12L6 0z"/></svg></button>
      <button type="button" class="raised arrow-key" aria-label="Vertical thumb"></button>
      <button type="button" class="raised arrow-key mt-auto" aria-label="Scroll down"><svg width="12" height="7"><path d="M0 0h12L6 7z"/></svg></button>
     </div>
    </div>
    <div class="d-flex h-track">
     <div class="track flex-grow-1 d-flex">
      <button type="button" class="raised arrow-key" aria-label="Scroll canvas left"><svg width="7" height="12"><path d="M7 0v12L0 6z"/></svg></button>
      <button type="button" class="raised arrow-key" aria-label="Horizontal thumb"></button>
      <button type="button" class="raised arrow-key ms-auto" aria-label="Scroll canvas right"><svg width="7" height="12"><path d="M0 0v12l7-6z"/></svg></button>
     </div>
     <div class="v-track"></div>
    </div>
   </section>
  </main>

  <footer class="status d-flex align-items-start gap-1">
   <div class="cell cell-pos ms-auto d-flex align-items-center ps-2"><svg width="26" height="24"><path d="M1 10h6m2 0h6M8 3v5m0 4v9" stroke="#000" stroke-width="2" fill="none"/><path d="M15 10h8v11" stroke="#000" stroke-width="2" stroke-dasharray="2 2" fill="none"/></svg><span class="ms-2 ps-1">0,0</span></div>
   <div class="cell cell-wide"></div>
   <div class="cell"></div>
   <div class="cell"></div>
   <div class="cell cell-db d-flex justify-content-center"><svg width="26" height="24"><use href="#db"/></svg></div>
   <svg width="26" height="28"><path d="M8 27L26 8M14 27L26 15M20 27l6-6" stroke="#aca899" stroke-width="2"/><path d="M10 27L26 11M16 27l10-10" stroke="#fff"/></svg>
  </footer>
 </div>
</div>
<script src="https://cdn.jsdelivr.net/npm/bootstrap@5.3.0/dist/js/bootstrap.bundle.min.js"></script>
</body>
</html>
